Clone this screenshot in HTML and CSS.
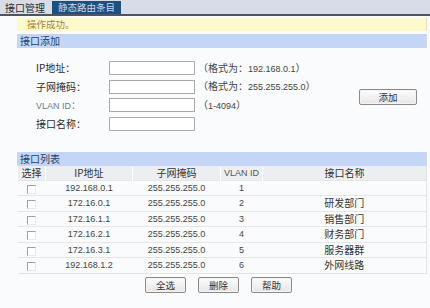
FILE: index.html
```html
<!DOCTYPE html>
<html lang="zh-CN">
<head>
    <meta charset="UTF-8">
    <title>接口管理</title>
    <link rel="stylesheet" href="styles.css">
</head>
<body>
    <div class="tabs">
        <span class="tab active">接口管理</span>
        <span class="tab">静态路由条目</span>
    </div>
    <div class="content">
        <div class="notice">操作成功。</div>
        <div class="bar">接口添加</div>
        <div class="form">
            <div class="fields">
                <div class="row">
                    <label>IP地址：</label>
                    <input type="text">
                    <span class="hint">（格式为：<span class="num">192.168.0.1</span>）</span>
                </div>
                <div class="row">
                    <label>子网掩码：</label>
                    <input type="text">
                    <span class="hint">（格式为：<span class="num">255.255.255.0</span>）</span>
                </div>
                <div class="row">
                    <label class="vlan"><span class="num">VLAN ID</span>：</label>
                    <input type="text">
                    <span class="hint">（<span class="num">1-4094</span>）</span>
                </div>
                <div class="row">
                    <label>接口名称：</label>
                    <input type="text">
                </div>
            </div>
            <button class="btn add">添加</button>
        </div>
        <div class="bar">接口列表</div>
        <table class="list">
            <tr>
                <th class="c-sel">选择</th>
                <th class="c-ip">IP地址</th>
                <th class="c-mask">子网掩码</th>
                <th class="c-vlan num">VLAN ID</th>
                <th>接口名称</th>
            </tr>
            <tr><td><span class="box"></span></td><td class="num">192.168.0.1</td><td class="num">255.255.255.0</td><td class="num">1</td><td></td></tr>
            <tr><td><span class="box"></span></td><td class="num">172.16.0.1</td><td class="num">255.255.255.0</td><td class="num">2</td><td>研发部门</td></tr>
            <tr><td><span class="box"></span></td><td class="num">172.16.1.1</td><td class="num">255.255.255.0</td><td class="num">3</td><td>销售部门</td></tr>
            <tr><td><span class="box"></span></td><td class="num">172.16.2.1</td><td class="num">255.255.255.0</td><td class="num">4</td><td>财务部门</td></tr>
            <tr><td><span class="box"></span></td><td class="num">172.16.3.1</td><td class="num">255.255.255.0</td><td class="num">5</td><td>服务器群</td></tr>
            <tr><td><span class="box"></span></td><td class="num">192.168.1.2</td><td class="num">255.255.255.0</td><td class="num">6</td><td>外网线路</td></tr>
        </table>
        <div class="actions">
            <button class="btn">全选</button>
            <button class="btn">删除</button>
            <button class="btn">帮助</button>
        </div>
    </div>
</body>
</html>
```

FILE: styles.css
```css
body {
    margin: 0;
    background: #fafbfd;
    font-family: "Noto Sans CJK SC", "Liberation Sans", sans-serif;
    font-size: 10px;
    line-height: 14px;
    color: #333;
}
.num {
    font-family: "Liberation Sans", sans-serif;
    font-size: 9px;
}
.tabs {
    height: 14px;
    background: #d8dce7;
    border-bottom: 2px solid #4f5662;
    display: flex;
    align-items: flex-end;
    padding-left: 5px;
    gap: 7px;
}
.tab {
    height: 13px;
    line-height: 13px;
    padding: 0 6px;
    background: #1f4f7b;
    color: #c9daf0;
    font-size: 9.5px;
}
.tab.active {
    background: none;
    color: #2a2a2a;
    padding: 0;
    font-size: 10px;
}
.content {
    margin: 2px 3px 0 17px;
}
.notice {
    height: 13px;
    line-height: 13px;
    background: #fdf9c9;
    border-right: 1px solid #e2dfbf;
    color: #a8823e;
    padding-left: 10px;
    font-size: 9.5px;
}
.bar {
    margin-top: 3px;
    height: 14px;
    line-height: 14px;
    background: #c3d6f5;
    border-right: 1px solid #d0d8e8;
    color: #24406e;
    padding-left: 3px;
}
.form {
    display: flex;
    align-items: center;
    padding: 13px 0 18px 19px;
}
.fields {
    display: flex;
    flex-direction: column;
    gap: 4.5px;
    flex: 1;
}
.row {
    display: flex;
    align-items: center;
    height: 14px;
}
.row label {
    width: 73px;
    color: #2a2a2a;
}
.row label.vlan {
    color: #6a7894;
}
.row input {
    width: 84px;
    height: 12px;
    border: 1px solid #a8a8a8;
    padding: 0;
    margin: 0;
    background: #fff;
}
.hint {
    margin-left: 3px;
    color: #444;
}
.btn {
    font-family: "Noto Sans CJK SC", sans-serif;
    font-size: 9.5px;
    color: #333;
    height: 16px;
    padding: 0;
    width: 41px;
    line-height: 12px;
    background: linear-gradient(#fdfdfd, #e6e6e6);
    border: 1px solid #8a8a8a;
    border-radius: 2px;
    box-shadow: inset 0 0 0 1px #f4f4f4;
}
.btn.add {
    width: 58px;
    margin-right: 10px;
    margin-top: 2px;
}
.list {
    width: 100%;
    border-collapse: collapse;
    border-right: 1px solid #e3e3e3;
    border-bottom: 1px solid #e3e3e3;
}
.list th {
    height: 14px;
    padding: 0;
    line-height: 14px;
    font-weight: normal;
    background: #eceef2;
    color: #333;
    border-left: 1px solid #fff;
}
.list th.num {
    font-size: 9px;
    color: #555;
}
.list td {
    height: 14.5px;
    padding: 0;
    line-height: 14px;
    text-align: center;
    border-top: 1px solid #e6e6e6;
    color: #444;
}
.list td:last-child {
    color: #333;
}
.c-sel {
    width: 27px;
}
.c-ip {
    width: 86px;
}
.c-mask {
    width: 87px;
}
.c-vlan {
    width: 41px;
}
.box {
    display: inline-block;
    width: 7px;
    height: 7px;
    border: 1px solid #a0a0a0;
    border-right-color: #e8e8e8;
    border-bottom-color: #e8e8e8;
    background: #fff;
    vertical-align: middle;
}
.actions {
    display: flex;
    gap: 12px;
    margin-top: 3px;
    padding-left: 128px;
}
```
